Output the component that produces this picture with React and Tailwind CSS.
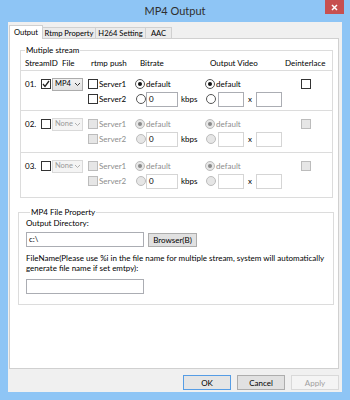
import React from 'react'

function Check({ checked, disabled }) {
  return (
    <div
      className={
        'w-[10px] h-[10px] shrink-0 border flex items-center justify-center ' +
        (disabled ? 'border-[#bcbcbc] bg-[#e6e6e6]' : 'border-[#333333] bg-white')
      }
    >
      {checked && (
        <svg width="8" height="8" viewBox="0 0 8 8">
          <polyline points="1,4 3,6.5 7,1" fill="none" stroke="#222" strokeWidth="1.3" />
        </svg>
      )}
    </div>
  )
}

function Radio({ checked, disabled }) {
  return (
    <div
      className={
        'w-[10px] h-[10px] shrink-0 rounded-full border flex items-center justify-center ' +
        (disabled ? 'border-[#bcbcbc] bg-[#e6e6e6]' : 'border-[#555555] bg-white')
      }
    >
      {checked && (
        <div className={'w-[4px] h-[4px] rounded-full ' + (disabled ? 'bg-[#8a8a8a]' : 'bg-[#111111]')} />
      )}
    </div>
  )
}

function Combo({ value, disabled }) {
  return (
    <div
      className={
        'w-[31px] h-[13px] shrink-0 border flex items-center pl-[2px] pr-[2px] overflow-hidden text-[7.5px] ' +
        (disabled
          ? 'border-[#d9d9d9] bg-[#f4f4f4] text-[#9a9a9a]'
          : 'border-[#acacac] bg-gradient-to-b from-[#f2f2f2] to-[#e3e3e3] text-black')
      }
    >
      <span className="flex-1 overflow-hidden whitespace-nowrap">{value}</span>
      <svg width="5" height="3" viewBox="0 0 5 3" className="shrink-0 ml-[1px]">
        <polyline points="0,0 2.5,2.5 5,0" fill="none" stroke={disabled ? '#b0b0b0' : '#333'} strokeWidth="1" />
      </svg>
    </div>
  )
}

function Field({ w, value, disabled }) {
  return (
    <div
      className={
        'h-[15px] shrink-0 bg-white border pl-[2px] pt-[1px] ' +
        w +
        (disabled ? ' border-[#d5d5d5]' : ' border-[#abadb3]')
      }
    >
      {value}
    </div>
  )
}

function StreamRow({ id, enabled, checked, combo, rowClass }) {
  const off = !enabled
  const dim = off ? 'text-[#8d8d8d]' : 'text-black'
  return (
    <div className={'pt-[6px] ' + rowClass}>
      <div className="h-[14px] flex items-center pl-[4px]">
        <span className="w-[16px] shrink-0">{id}</span>
        <Check checked={checked} />
        <div className="w-[1px] shrink-0" />
        <Combo value={combo} disabled={off} />
        <div className="w-[5px] shrink-0" />
        <div className="w-[47px] shrink-0 flex items-center">
          <Check disabled={off} />
          <span className={'ml-[1px] ' + dim}>Server1</span>
        </div>
        <div className="w-[70px] shrink-0 flex items-center">
          <Radio checked disabled={off} />
          <span className={'ml-[1px] ' + dim}>default</span>
        </div>
        <div className="w-[96px] shrink-0 flex items-center">
          <Radio checked disabled={off} />
          <span className={'ml-[1px] ' + dim}>default</span>
        </div>
        <Check disabled={off} />
      </div>
      <div className="h-[16px] flex items-center pl-[4px]">
        <div className="w-[63px] shrink-0" />
        <div className="w-[47px] shrink-0 flex items-center">
          <Check disabled={off} />
          <span className={'ml-[1px] ' + dim}>Server2</span>
        </div>
        <div className="w-[70px] shrink-0 flex items-center">
          <div className="ml-[1px]">
            <Radio disabled={off} />
          </div>
          <Field w="w-[32px]" value="0" disabled={off} />
          <span className="ml-[3px]">kbps</span>
        </div>
        <div className="flex items-center">
          <div className="ml-[1px]">
            <Radio disabled={off} />
          </div>
          <div className="ml-[2px]">
            <Field w="w-[26px]" disabled={off} />
          </div>
          <span className="w-[12px] shrink-0 pl-[4px]">x</span>
          <Field w="w-[26px]" disabled={off} />
        </div>
      </div>
    </div>
  )
}

export default function App() {
  return (
    <div className="w-[350px] h-[400px] bg-[#8ec5f5] flex flex-col font-['Lato','Liberation_Sans',sans-serif] text-[8px] leading-[10px] text-black">
      {/* title bar */}
      <div className="relative h-[22px] flex items-center justify-center">
        <span className="text-[11px] leading-[14px] text-[#2e2e2e] -mt-[1px]">MP4 Output</span>
        <div className="absolute top-0 right-[6px] w-[19px] h-[14px] bg-[#c75050] flex items-center justify-center">
          <svg width="7" height="7" viewBox="0 0 7 7">
            <path d="M1 1 L6 6 M6 1 L1 6" stroke="#fff" strokeWidth="1.5" />
          </svg>
        </div>
      </div>

      {/* client area */}
      <div className="mx-[8px] h-[370px] bg-[#f0f0f0] pt-[3px] pl-[1px] flex flex-col">
        {/* tabs */}
        <div className="h-[13px] flex items-start text-[7.6px]">
          <div className="relative z-10 w-[34px] h-[14px] bg-white border border-b-0 border-[#d0d0d0] flex items-center justify-center pb-[1px]">
            Output
          </div>
          <div className="mt-[2px] w-[53px] h-[11px] bg-[#ebebeb] border-t border-r border-[#d0d0d0] flex items-center justify-center whitespace-nowrap">
            Rtmp Property
          </div>
          <div className="mt-[2px] w-[50px] h-[11px] bg-[#ebebeb] border-t border-r border-[#d0d0d0] flex items-center justify-center whitespace-nowrap">
            H264 Setting
          </div>
          <div className="mt-[2px] w-[26px] h-[11px] bg-[#ebebeb] border-t border-r border-[#d0d0d0] flex items-center justify-center">
            AAC
          </div>
        </div>

        {/* tab panel */}
        <div className="w-[330px] h-[331px] bg-white border border-[#d0d0d0]">
          <fieldset className="ml-[10px] mt-[6px] w-[313px] border border-[#dcdcdc]">
            <legend className="ml-[4px] px-[1px] leading-[10px]">Mutiple stream</legend>
            <div className="h-[16px] flex items-center pl-[4px] border-b border-[#dcdcdc]">
              <span className="w-[37px] shrink-0">StreamID</span>
              <span className="w-[29px] shrink-0">File</span>
              <span className="w-[49px] shrink-0">rtmp push</span>
              <span className="w-[70px] shrink-0">Bitrate</span>
              <span className="w-[75px] shrink-0">Output Video</span>
              <span>Deinterlace</span>
            </div>
            <StreamRow id="01." enabled checked combo="MP4" rowClass="h-[40px] border-b border-[#dcdcdc]" />
            <StreamRow id="02." combo="None" rowClass="h-[42px] border-b border-[#dcdcdc]" />
            <StreamRow id="03." combo="None" rowClass="h-[44px]" />
          </fieldset>

          <fieldset className="ml-[8px] mt-[9px] w-[316px] border border-[#dcdcdc] pl-[7px] pb-[10px]">
            <legend className="ml-[4px] px-[1px] leading-[10px]">MP4 File Property</legend>
            <div className="mt-[1px] h-[10px]">Output Directory:</div>
            <div className="mt-[4px] flex items-start">
              <Field w="w-[118px]" value="c:\" />
              <div className="ml-[4px] mt-[1px] w-[49px] h-[14px] bg-[#e1e1e1] border border-[#adadad] flex items-center justify-center">
                Browser(B)
              </div>
            </div>
            <div className="mt-[6px] whitespace-nowrap">
              FileName(Please use %i in the file name for multiple stream, system will automatically
              <br />
              generate file name if set emtpy):
            </div>
            <div className="mt-[6px]">
              <Field w="w-[118px]" />
            </div>
          </fieldset>
        </div>

        {/* buttons */}
        <div className="mt-[6px] flex justify-end pr-[3px] gap-[6px]">
          <div className="w-[48px] h-[15px] bg-[#e5e5e5] border border-[#569de5] flex items-center justify-center">OK</div>
          <div className="w-[48px] h-[15px] bg-[#e1e1e1] border border-[#adadad] flex items-center justify-center">Cancel</div>
          <div className="w-[48px] h-[15px] bg-[#f4f4f4] border border-[#d9d9d9] text-[#a0a0a0] flex items-center justify-center">Apply</div>
        </div>
      </div>
    </div>
  )
}
